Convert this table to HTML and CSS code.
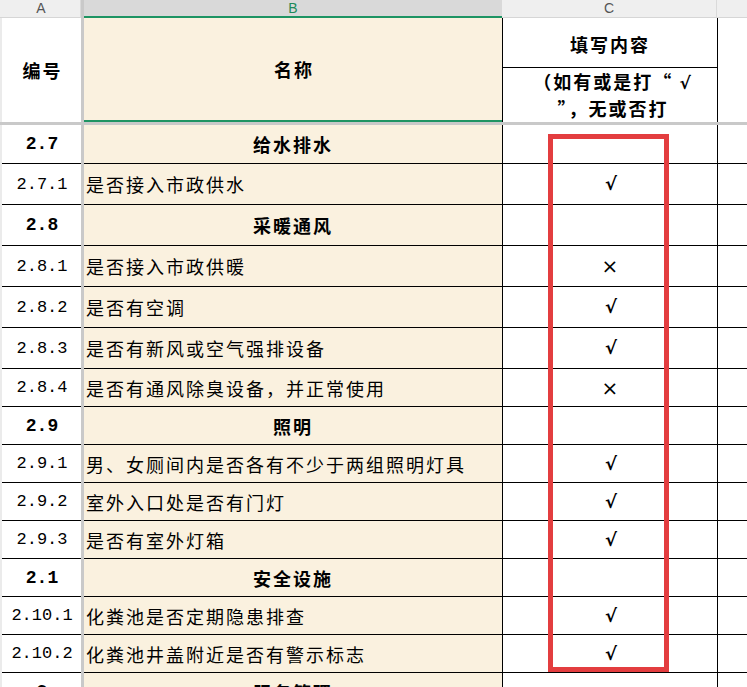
FILE: index.html
```html
<!DOCTYPE html>
<html lang="zh">
<head>
<meta charset="utf-8">
<title>Sheet</title>
<link rel="stylesheet" href="styles.css">
</head>
<body>
<div class="sheet">
  <div class="row colhdr">
    <div class="s"></div>
    <div class="ch">A</div>
    <div class="bar"></div>
    <div class="ch sel">B</div>
    <div class="ch">C</div>
    <div class="ch last"></div>
  </div>
  <div class="row head">
    <div class="s"></div>
    <div class="a hcell">编号</div>
    <div class="bar"></div>
    <div class="b hcell bsel">名称</div>
    <div class="c split">
      <div class="top">填写内容</div>
      <div class="bot">（如有或是打“ <span class="hk">√</span><br>”，无或否打</div>
    </div>
    <div class="d"></div>
  </div>
  <div class="hbar"></div>

  <div class="row h39 sec"><div class="s"></div><div class="a">2.7</div><div class="bar"></div><div class="b">给水排水</div><div class="c"></div><div class="d"></div></div>
  <div class="row h41"><div class="s"></div><div class="a">2.7.1</div><div class="bar"></div><div class="b">是否接入市政供水</div><div class="c"><span class="ok">√</span></div><div class="d"></div></div>
  <div class="row h41 sec"><div class="s"></div><div class="a">2.8</div><div class="bar"></div><div class="b">采暖通风</div><div class="c"></div><div class="d"></div></div>
  <div class="row h41"><div class="s"></div><div class="a">2.8.1</div><div class="bar"></div><div class="b">是否接入市政供暖</div><div class="c"><span class="no">×</span></div><div class="d"></div></div>
  <div class="row h41"><div class="s"></div><div class="a">2.8.2</div><div class="bar"></div><div class="b">是否有空调</div><div class="c"><span class="ok">√</span></div><div class="d"></div></div>
  <div class="row h41"><div class="s"></div><div class="a">2.8.3</div><div class="bar"></div><div class="b">是否有新风或空气强排设备</div><div class="c"><span class="ok">√</span></div><div class="d"></div></div>
  <div class="row h38"><div class="s"></div><div class="a">2.8.4</div><div class="bar"></div><div class="b">是否有通风除臭设备，并正常使用</div><div class="c"><span class="no">×</span></div><div class="d"></div></div>
  <div class="row h38 sec"><div class="s"></div><div class="a">2.9</div><div class="bar"></div><div class="b">照明</div><div class="c"></div><div class="d"></div></div>
  <div class="row h38"><div class="s"></div><div class="a">2.9.1</div><div class="bar"></div><div class="b">男、女厕间内是否各有不少于两组照明灯具</div><div class="c"><span class="ok">√</span></div><div class="d"></div></div>
  <div class="row h38"><div class="s"></div><div class="a">2.9.2</div><div class="bar"></div><div class="b">室外入口处是否有门灯</div><div class="c"><span class="ok">√</span></div><div class="d"></div></div>
  <div class="row h38"><div class="s"></div><div class="a">2.9.3</div><div class="bar"></div><div class="b">是否有室外灯箱</div><div class="c"><span class="ok">√</span></div><div class="d"></div></div>
  <div class="row h38 sec"><div class="s"></div><div class="a">2.1</div><div class="bar"></div><div class="b">安全设施</div><div class="c"></div><div class="d"></div></div>
  <div class="row h38"><div class="s"></div><div class="a">2.10.1</div><div class="bar"></div><div class="b">化粪池是否定期隐患排查</div><div class="c"><span class="ok">√</span></div><div class="d"></div></div>
  <div class="row h38"><div class="s"></div><div class="a">2.10.2</div><div class="bar"></div><div class="b">化粪池井盖附近是否有警示标志</div><div class="c"><span class="ok">√</span></div><div class="d"></div></div>
  <div class="row h38 sec"><div class="s"></div><div class="a">3</div><div class="bar"></div><div class="b">服务管理</div><div class="c"></div><div class="d"></div></div>

  <div class="mark"></div>
</div>
</body>
</html>
```

FILE: styles.css
```css
* { box-sizing: border-box; }
html, body { margin: 0; padding: 0; }
body {
  width: 747px;
  height: 687px;
  overflow: hidden;
  background: #fff;
  font-family: "Noto Sans CJK SC", "Noto Sans", sans-serif;
  color: #000;
}
.sheet {
  position: relative;
  width: 747px;
}
.row {
  display: grid;
  grid-template-columns: 2px 79px 3px 418px 215px 1fr;
}
.s { background: #ebebeb; }
.bar { background: #c9c9c9; }

/* column header */
.colhdr { height: 18px; }
.ch {
  background: #efefef;
  border-bottom: 1px solid #d6d6d6;
  border-right: 1px solid #dadada;
  font-family: "Liberation Sans", Arial, sans-serif;
  font-size: 14px;
  line-height: 16px;
  color: #555;
  text-align: center;
}
.ch.sel {
  background: #d9d9d9;
  color: #1e8a5a;
  border-bottom: 2px solid #1e9463;
  border-right: none;
}
.ch.last { border-right: none; }
.colhdr .s { background: #efefef; border-bottom: 1px solid #d6d6d6; }

/* body cells */
.a, .b, .c, .d { border-bottom: 1px solid #000; }
.b { background: #faf1df; }
.c { border-left: 1px solid #000; }
.d { border-left: 1px solid #000; }
.h38 { height: 38px; }
.h39 { height: 39px; }
.h41 { height: 41px; }

.a {
  display: flex;
  align-items: center;
  justify-content: center;
  font-family: "Liberation Mono", "Courier New", monospace;
  font-size: 17px;
  padding-left: 1px;
}
.b {
  display: flex;
  align-items: center;
  padding-left: 2px;
  font-size: 18px;
  letter-spacing: 2px;
  white-space: nowrap;
}
.c {
  display: flex;
  align-items: center;
  justify-content: center;
}
.sec .a { font-weight: 700; font-size: 18px; }
.sec .b { font-weight: 700; justify-content: center; padding-left: 0; }

/* table header */
.head { height: 104px; }
.head .a, .head .b, .head .c, .head .d { border-bottom: none; }
.head .a { background: #fff; }
.head .b.bsel { border-bottom: 2px solid #1e9463; background: #faf1df; }
.hcell {
  display: flex;
  align-items: center;
  justify-content: center;
  font-family: "Noto Sans CJK SC", sans-serif;
  font-weight: 700;
  font-size: 18px;
  letter-spacing: 2px;
  padding-left: 2px;
}
.c.split {
  display: flex;
  flex-direction: column;
  align-items: stretch;
  justify-content: flex-start;
  font-weight: 700;
  font-size: 18px;
  letter-spacing: 2px;
  text-align: center;
}
.split .top {
  height: 50px;
  border-bottom: 1px solid #000;
  display: flex;
  align-items: center;
  justify-content: center;
  padding-top: 3px;
}
.split .bot {
  flex: 1;
  line-height: 25px;
  padding-top: 1px;
  padding-left: 6px;
}
.hk {
  font-family: "DejaVu Sans", sans-serif;
  font-weight: 700;
  font-size: 17px;
}
.hbar { height: 3px; background: #c9c9c9; }

.ok {
  font-family: "DejaVu Sans", sans-serif;
  font-weight: 700;
  font-size: 18px;
  line-height: 1;
  padding-left: 2px;
}
.no {
  font-family: "DejaVu Sans", sans-serif;
  font-size: 20px;
  line-height: 1;
}

.mark {
  position: absolute;
  left: 548px;
  top: 134px;
  width: 121px;
  height: 538px;
  border: 5px solid #e33d3f;
}
```
